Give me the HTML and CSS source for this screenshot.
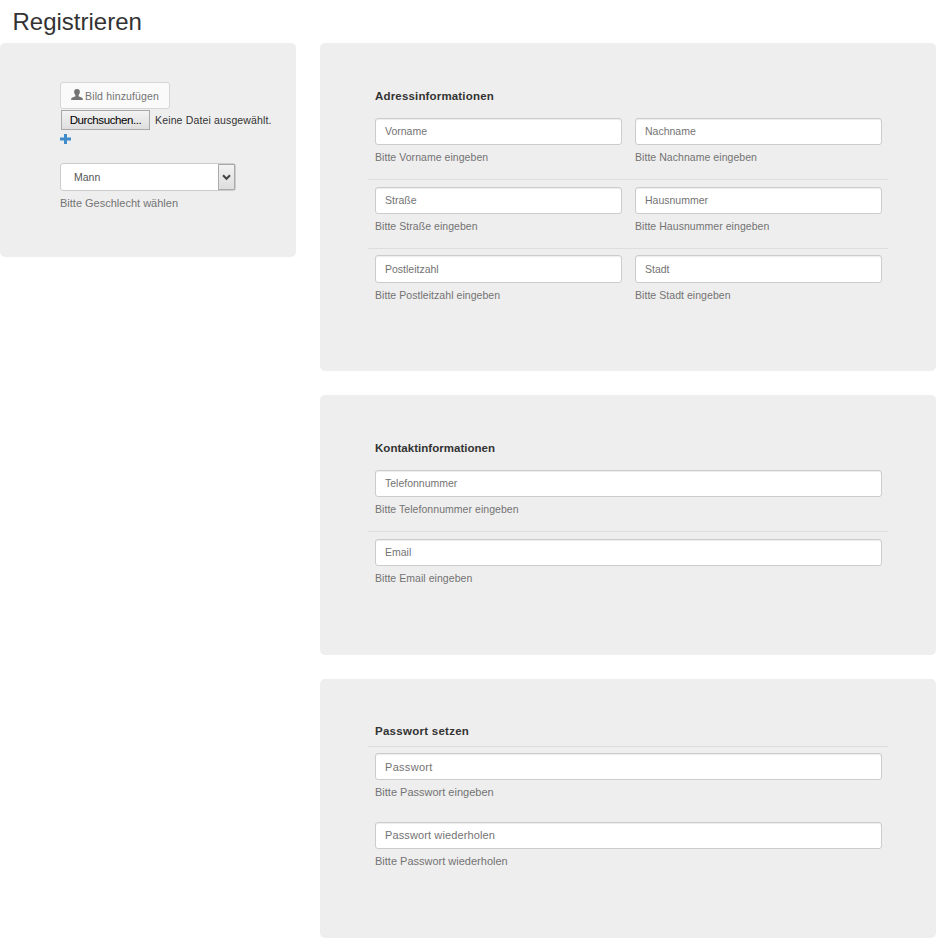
FILE: index.html
```html
<!DOCTYPE html>
<html lang="de">
<head>
<meta charset="utf-8">
<title>Registrieren</title>
<link rel="stylesheet" href="styles.css">
</head>
<body>
<h1>Registrieren</h1>
<form class="layout">
  <section class="panel profile">
    <button type="button" class="add-image">
      <svg width="12" height="11" viewBox="0 0 12 11"><path d="M6 0C4 0 3 1.200 3.100 3C3.200 4.500 4 5.500 4.400 6.200V7.200C3.500 8 .6 8.200.2 9.500V11H11.800V9.500C11.400 8.200 8.500 8 7.600 7.200V6.200C8 5.500 8.800 4.500 8.900 3C9 1.200 8 0 6 0Z" fill="#737373"/></svg>
      <span>Bild hinzufügen</span>
    </button>
    <div class="file">
      <button type="button" class="browse">Durchsuchen...</button>
      <span class="file-name">Keine Datei ausgewählt.</span>
    </div>
    <svg class="plus" width="11" height="10" viewBox="0 0 11 10"><path d="M4 0H7V3.500H11V6.500H7V10H4V6.500H0V3.500H4Z" fill="#428bca"/></svg>
    <div class="select"><span>Mann</span><span class="arrow"><svg width="9" height="7" viewBox="0 0 9 7"><path d="M1 1.200L4.500 4.800L8 1.200" fill="none" stroke="#444" stroke-width="2"/></svg></span></div>
    <p class="help spaced">Bitte Geschlecht wählen</p>
  </section>
  <div class="sections">
    <section class="panel address">
      <h2>Adressinformationen</h2>
      <div class="row plain">
        <label><input placeholder="Vorname"><span class="help">Bitte Vorname eingeben</span></label>
        <label><input placeholder="Nachname"><span class="help">Bitte Nachname eingeben</span></label>
      </div>
      <div class="row">
        <label><input placeholder="Straße"><span class="help">Bitte Straße eingeben</span></label>
        <label><input placeholder="Hausnummer"><span class="help">Bitte Hausnummer eingeben</span></label>
      </div>
      <div class="row tall">
        <label><input placeholder="Postleitzahl"><span class="help">Bitte Postleitzahl eingeben</span></label>
        <label><input placeholder="Stadt"><span class="help">Bitte Stadt eingeben</span></label>
      </div>
    </section>
    <section class="panel contact">
      <h2>Kontaktinformationen</h2>
      <div class="row plain">
        <label><input placeholder="Telefonnummer"><span class="help">Bitte Telefonnummer eingeben</span></label>
      </div>
      <div class="row">
        <label><input placeholder="Email"><span class="help">Bitte Email eingeben</span></label>
      </div>
    </section>
    <section class="panel password">
      <h2>Passwort setzen</h2>
      <div class="row tight">
        <label><input class="short" placeholder="Passwort"><span class="help spaced">Bitte Passwort eingeben</span></label>
      </div>
      <div class="row plain">
        <label><input class="long" placeholder="Passwort wiederholen"><span class="help spaced">Bitte Passwort wiederholen</span></label>
      </div>
    </section>
  </div>
</form>
</body>
</html>
```
FILE: styles.css
```css
* { box-sizing: border-box; }
body {
  margin: 0;
  background: #fff;
  color: #333;
  font: 10.5px/15px "Liberation Sans", Arial, sans-serif;
}
h1 {
  margin: 0;
  height: 43px;
  padding: 8px 0 0 12.5px;
  font-size: 24px;
  line-height: 28px;
  font-weight: 400;
}
.layout {
  display: grid;
  grid-template-columns: 296px 616px;
  column-gap: 24px;
  align-items: start;
}
.sections { display: grid; row-gap: 24px; }
.panel { background: #eee; border-radius: 5px; }
.profile { height: 214px; padding: 39px 0 0 60px; }
.address { height: 328px; padding: 45px 48px 0; }
.contact { height: 260px; padding: 45px 48px 0; }
.password { height: 259px; padding: 44px 48px 0; }

h2 {
  margin: 0;
  height: 22px;
  padding-left: 7px;
  font-size: 11.5px;
  line-height: 16px;
  letter-spacing: .17px;
}
.contact h2 { letter-spacing: .03px; }
.password h2 { height: 23px; letter-spacing: .27px; }

.row {
  display: flex;
  gap: 13px;
  height: 69px;
  padding: 7px 6px 0 7px;
  border-top: 1px solid #ddd;
}
.row.plain { border-top-color: transparent; }
.row.tall, .row.tight { padding-top: 6px; }
.row.tight { height: 68px; }
label { flex: 1; }
input {
  display: block;
  width: 100%;
  height: 27px;
  margin: 0;
  padding: 0 9px 1px;
  border: 1px solid #ccc;
  border-radius: 3px;
  background: #fff;
  box-shadow: inset 0 1px 1px rgba(0, 0, 0, .075);
  font: inherit;
}
input::placeholder { color: #737373; opacity: 1; }
.tall input { height: 28px; padding-bottom: 0; }
.password input { font-size: 11px; letter-spacing: .12px; }
.password input.short { padding-bottom: 0; letter-spacing: .3px; }
.help { display: block; margin: 5px 0 0; color: #737373; letter-spacing: .05px; }
.help.spaced { font-size: 11px; letter-spacing: 0; }

.add-image {
  display: flex;
  align-items: center;
  gap: 2px;
  width: 110px;
  height: 27px;
  padding: 1px 0 0 10px;
  border: 1px solid #d6d6d6;
  border-radius: 3px;
  background: #fafafa;
  color: #737373;
  font: inherit;
  letter-spacing: .15px;
}
.add-image svg { margin-bottom: 3px; }
.file {
  display: flex;
  align-items: center;
  gap: 5px;
  padding: 1px 0 0 1px;
  letter-spacing: .15px;
}
.browse {
  width: 89px;
  height: 20px;
  padding: 0;
  border: 1px solid #a9a9a9;
  background: linear-gradient(#f2f2f2, #dedede);
  color: #000;
  font: 11.5px/18px "Liberation Sans", Arial, sans-serif;
  letter-spacing: -.4px;
}
.plus { display: block; margin: 4px 0 19px; }
.select {
  display: flex;
  justify-content: space-between;
  width: 176px;
  height: 28px;
  padding-left: 13px;
  border: 1px solid #ccc;
  border-radius: 3px;
  background: #fff;
  color: #555;
  line-height: 26px;
}
.arrow {
  display: flex;
  align-items: center;
  justify-content: center;
  width: 17px;
  border: 1px solid #aaa;
  background: linear-gradient(#f2f2f2, #dedede);
}
```
